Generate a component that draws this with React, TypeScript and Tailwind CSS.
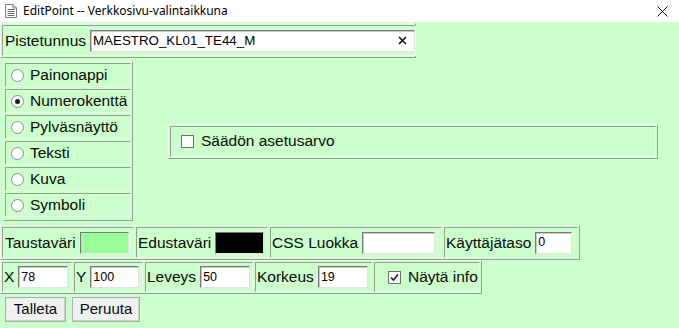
import React from "react";

const OUT = "border border-t-[#eef8ee] border-l-[#eef8ee] border-b-[#8fa38f] border-r-[#8fa38f] p-px flex gap-[2px]";
const CELL = "border border-t-[#8fa38f] border-l-[#8fa38f] border-b-[#eef8ee] border-r-[#eef8ee] flex items-center";
const INPUT = "h-[22px] bg-white border border-t-[#7a7a7a] border-l-[#7a7a7a] border-b-[#e3e3e3] border-r-[#e3e3e3] shadow-[inset_1px_1px_0_#c8c8c8] flex items-center pl-[2px] text-[12.5px] text-black";

function Radio({ checked }: { checked?: boolean }) {
  return (
    <div className="w-[13px] h-[13px] rounded-full border border-[#8b8b8b] bg-white flex items-center justify-center shrink-0">
      {checked && <div className="w-[5px] h-[5px] rounded-full bg-[#1a1a1a]" />}
    </div>
  );
}

function Check({ checked }: { checked?: boolean }) {
  return (
    <div className="w-[13px] h-[13px] border border-[#6f6f6f] bg-white flex items-center justify-center shrink-0">
      {checked && (
        <svg width="9" height="9" viewBox="0 0 9 9">
          <path d="M1 4.5 L3.5 7 L8 1.5" stroke="#1a1a1a" strokeWidth="1.6" fill="none" />
        </svg>
      )}
    </div>
  );
}

export default function App() {
  const radios = ["Painonappi", "Numerokenttä", "Pylväsnäyttö", "Teksti", "Kuva", "Symboli"];
  return (
    <div className="w-[679px] h-[328px] bg-[#ccffcc] overflow-hidden text-[#0a0a0a]" style={{ fontFamily: '"Liberation Sans", Arial, sans-serif' }}>
      {/* title bar */}
      <div className="h-[22px] bg-white flex items-center relative">
        <svg className="ml-[4px]" width="14" height="16" viewBox="0 0 14 16">
          <path d="M1.5 1.5 H9 L12.5 5 V14.5 H1.5 Z" fill="#fff" stroke="#7a7a7a" />
          <path d="M9 1.5 V5 H12.5" fill="none" stroke="#7a7a7a" />
          <path d="M3.5 6.5 H10.5 M3.5 8.5 H10.5 M3.5 10.5 H10.5 M3.5 12.5 H10.5" stroke="#6a6a6a" />
        </svg>
        <span className="ml-[5px] text-[12px] text-black" style={{ fontFamily: '"Noto Sans", "Open Sans", sans-serif' }}>
          EditPoint -- Verkkosivu-valintaikkuna
        </span>
        <svg className="absolute right-[11px] top-[6px]" width="11" height="11" viewBox="0 0 11 11">
          <path d="M0.5 0.5 L10.5 10.5 M10.5 0.5 L0.5 10.5" stroke="#111" strokeWidth="1" />
        </svg>
      </div>

      {/* Pistetunnus */}
      <div className={`${OUT} w-[416px] h-[35px] mt-px`}>
        <div className={`${CELL} flex-1 pl-[2px] gap-[4px] text-[15.5px]`}>
          <span>Pistetunnus</span>
          <div className={`${INPUT} w-[325px] justify-between text-[13.33px] pr-[7px]`}>
            <span>MAESTRO_KL01_TE44_M</span>
            <svg width="9" height="9" viewBox="0 0 9 9">
              <path d="M1 1 L8 8 M8 1 L1 8" stroke="#111" strokeWidth="1.6" />
            </svg>
          </div>
        </div>
      </div>

      {/* middle */}
      <div className="flex items-center mt-[3px]">
        <div className={`${OUT} flex-col w-[130px] h-[160px] ml-[3px]`}>
          {radios.map((r, i) => (
            <div key={r} className={`${CELL} h-[24px] pl-[5px] gap-[6px] text-[15.5px]`}>
              <Radio checked={i === 1} />
              <span>{r}</span>
            </div>
          ))}
        </div>
        <div className={`${OUT} w-[490px] h-[35px] ml-[35px]`}>
          <div className={`${CELL} flex-1 pl-[10px] gap-[7px] text-[15.5px]`}>
            <Check />
            <span>Säädön asetusarvo</span>
          </div>
        </div>
      </div>

      {/* colours row */}
      <div className={`${OUT} w-[580px] h-[35px] mt-[4px] text-[15.5px]`}>
        <div className={`${CELL} w-[132px] pl-[2px] gap-[4px]`}>
          <span>Taustaväri</span>
          <div className="w-[49px] h-[22px] bg-[#99ff99] border border-t-[#7a7a7a] border-l-[#7a7a7a] border-b-[#e3e3e3] border-r-[#e3e3e3]" />
        </div>
        <div className={`${CELL} w-[132px] pl-[1px] gap-[4px]`}>
          <span>Edustaväri</span>
          <div className="w-[49px] h-[22px] bg-black border border-t-[#7a7a7a] border-l-[#7a7a7a] border-b-[#e3e3e3] border-r-[#e3e3e3]" />
        </div>
        <div className={`${CELL} w-[172px] pl-[1px] gap-[4px]`}>
          <span>CSS Luokka</span>
          <div className={`${INPUT} w-[73px]`} />
        </div>
        <div className={`${CELL} flex-1 pl-[1px] gap-[4px]`}>
          <span>Käyttäjätaso</span>
          <div className={`${INPUT} w-[37px]`}>0</div>
        </div>
      </div>

      {/* position row */}
      <div className={`${OUT} w-[482px] h-[34px] text-[15.5px]`}>
        <div className={`${CELL} w-[70px] pl-[1px] gap-[4px]`}>
          <span>X</span>
          <div className={`${INPUT} w-[50px]`}>78</div>
        </div>
        <div className={`${CELL} w-[69px] pl-[1px] gap-[4px]`}>
          <span>Y</span>
          <div className={`${INPUT} w-[49px]`}>100</div>
        </div>
        <div className={`${CELL} w-[108px] pl-[1px] gap-[4px]`}>
          <span>Leveys</span>
          <div className={`${INPUT} w-[50px]`}>50</div>
        </div>
        <div className={`${CELL} w-[117px] pl-[1px] gap-[4px]`}>
          <span>Korkeus</span>
          <div className={`${INPUT} w-[50px]`}>19</div>
        </div>
        <div className={`${CELL} flex-1 pl-[13px] gap-[7px]`}>
          <Check checked />
          <span>Näytä info</span>
        </div>
      </div>

      {/* buttons */}
      <div className="flex gap-[6px] ml-[5px] mt-[3px] text-[15px]">
        <button className="w-[61px] h-[25px] bg-[#f0f0f0] border border-[#adadad] shadow-[inset_-1px_-1px_0_#d0d0d0]">Talleta</button>
        <button className="w-[68px] h-[25px] bg-[#f0f0f0] border border-[#adadad] shadow-[inset_-1px_-1px_0_#d0d0d0]">Peruuta</button>
      </div>
    </div>
  );
}
